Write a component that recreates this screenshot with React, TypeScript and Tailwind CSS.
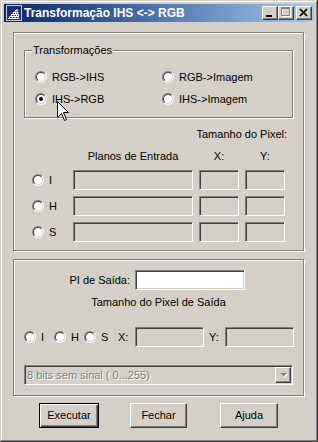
import React from "react";

const raised =
  "bg-[#d4d0c8] border border-t-white border-l-white border-r-[#404040] border-b-[#404040] shadow-[inset_-1px_-1px_0_#808080]";
const sunken =
  "border border-t-[#808080] border-l-[#808080] border-r-white border-b-white shadow-[inset_1px_1px_0_#404040,inset_-1px_-1px_0_#d4d0c8]";
const etched = "border border-[#808080] shadow-[inset_1px_1px_0_#fff,1px_1px_0_#fff]";

function Radio({ checked }: { checked?: boolean }) {
  return (
    <div className="w-[12px] h-[12px] shrink-0 rounded-full border border-t-[#808080] border-l-[#808080] border-r-white border-b-white">
      <div className="w-full h-full rounded-full border border-t-[#404040] border-l-[#404040] border-r-[#d4d0c8] border-b-[#d4d0c8] bg-white flex items-center justify-center">
        {checked && <div className="w-[4px] h-[4px] rounded-full bg-black" />}
      </div>
    </div>
  );
}

function Field({ w, white }: { w: string; white?: boolean }) {
  return <div className={`${w} h-[20px] ${sunken} ${white ? "bg-white" : "bg-[#d4d0c8]"}`} />;
}

function Btn({ label, w, def }: { label: string; w: string; def?: boolean }) {
  return (
    <div
      className={`${w} h-[25px] flex items-center justify-center ${
        def
          ? "border border-black shadow-[inset_1px_1px_0_#fff,inset_-1px_-1px_0_#404040,inset_-2px_-2px_0_#808080]"
          : raised
      }`}
    >
      {label}
    </div>
  );
}

function AppIcon() {
  return (
    <svg width="16" height="16" viewBox="0 0 16 16">
      <rect x="0.5" y="0.5" width="15" height="15" fill="#1b2c70" stroke="#c8cce0" />
      <g stroke="#fff" strokeWidth="1" fill="none">
        <path d="M2 13.5H13.5 M3.5 11.5H13 M5 9.5H12.5 M7 7.5H12 M9 5.5H11.5" />
        <path d="M2.5 13.5L11.5 4 M5.5 13.5L12 5.5 M8.5 13.5L12.5 7.5 M11.5 13.5L13 9.5" />
      </g>
    </svg>
  );
}

function Cursor() {
  return (
    <svg width="13" height="21" viewBox="0 0 13 21" className="absolute left-[57px] top-[101px]">
      <path
        d="M0.5 0.5 L0.5 16.5 L4.5 12.5 L7.5 19.5 L9.5 18.5 L6.5 11.5 L11.5 11.5 Z"
        fill="#fff"
        stroke="#000"
        strokeWidth="1"
        strokeLinejoin="miter"
      />
    </svg>
  );
}

export default function App() {
  return (
    <div className="relative w-[318px] h-[442px] bg-[#d4d0c8] p-[4px] font-['Liberation_Sans',Arial,sans-serif] text-[11px] leading-[13px] text-black shadow-[inset_-1px_-1px_0_#404040,inset_1px_1px_0_#d4d0c8,inset_-2px_-2px_0_#808080,inset_2px_2px_0_#fff] overflow-hidden">
      {/* Title bar */}
      <div className="h-[18px] flex items-center bg-gradient-to-r from-[#0a246a] to-[#a6caf0]">
        <div className="ml-[2px]">
          <AppIcon />
        </div>
        <div className="ml-[2px] text-white font-bold text-[12px] leading-[14px] whitespace-nowrap">
          Transformação IHS &lt;-&gt; RGB
        </div>
        <div className="ml-auto flex items-center mr-[2px]">
          <div className={`w-[16px] h-[14px] ${raised}`}>
            <svg width="14" height="12" viewBox="0 0 14 12">
              <rect x="3" y="8" width="6" height="2" fill="#000" />
            </svg>
          </div>
          <div className={`w-[16px] h-[14px] ${raised}`}>
            <svg width="14" height="12" viewBox="0 0 14 12">
              <g fill="none" stroke="#fff">
                <rect x="3.5" y="1.5" width="8" height="8" />
              </g>
              <g fill="none" stroke="#808080">
                <rect x="2.5" y="0.5" width="8" height="8" />
                <line x1="2.5" y1="1.5" x2="10.5" y2="1.5" />
              </g>
            </svg>
          </div>
          <div className={`ml-[2px] w-[16px] h-[14px] ${raised}`}>
            <svg width="14" height="12" viewBox="0 0 14 12">
              <path d="M3 2 L10 9 M10 2 L3 9" stroke="#000" strokeWidth="1.7" />
            </svg>
          </div>
        </div>
      </div>

      {/* Panel 1 */}
      <div className={`mt-[10px] ml-[9px] w-[291px] h-[219px] ${etched}`}>
        <div className={`relative mt-[17px] ml-[10px] w-[269px] h-[68px] ${etched}`}>
          <span className="absolute left-[7px] top-[-7px] px-[1px] bg-[#d4d0c8]">Transformações</span>
          <div className="pt-[20px] pl-[10px] grid grid-cols-[127px_1fr] gap-y-[10px]">
            <div className="flex items-center gap-[5px] h-[12px]">
              <Radio />
              <span>RGB-&gt;IHS</span>
            </div>
            <div className="flex items-center gap-[5px] h-[12px]">
              <Radio />
              <span>RGB-&gt;Imagem</span>
            </div>
            <div className="flex items-center gap-[5px] h-[12px]">
              <Radio checked />
              <span>IHS-&gt;RGB</span>
            </div>
            <div className="flex items-center gap-[5px] h-[12px]">
              <Radio />
              <span>IHS-&gt;Imagem</span>
            </div>
          </div>
        </div>

        <div className="mt-[10px] text-right pr-[16px]">Tamanho do Pixel:</div>

        <div className="mt-[9px] flex">
          <div className="w-[59px]" />
          <div className="w-[120px] text-center">Planos de Entrada</div>
          <div className="ml-[6px] w-[40px] text-center">X:</div>
          <div className="ml-[6px] w-[40px] text-center">Y:</div>
        </div>

        <div className="mt-[7px] flex flex-col gap-[6px]">
          {["I", "H", "S"].map((l) => (
            <div key={l} className="flex items-center">
              <div className="w-[59px] pl-[18px] flex items-center gap-[5px]">
                <Radio />
                <span>{l}</span>
              </div>
              <Field w="w-[120px]" />
              <div className="ml-[6px]">
                <Field w="w-[40px]" />
              </div>
              <div className="ml-[6px]">
                <Field w="w-[40px]" />
              </div>
            </div>
          ))}
        </div>
      </div>

      {/* Panel 2 */}
      <div className={`mt-[8px] ml-[9px] w-[291px] h-[137px] ${etched}`}>
        <div className="mt-[10px] flex items-center">
          <div className="w-[116px] text-right">PI de Saída:</div>
          <div className="ml-[5px]">
            <Field w="w-[110px]" white />
          </div>
        </div>
        <div className="mt-[6px] text-center">Tamanho do Pixel de Saída</div>
        <div className="mt-[18px] ml-[10px] flex items-center">
          <div className="w-[30px] flex items-center gap-[5px]">
            <Radio />
            <span>I</span>
          </div>
          <div className="w-[30px] flex items-center gap-[5px]">
            <Radio />
            <span>H</span>
          </div>
          <div className="w-[34px] flex items-center gap-[5px]">
            <Radio />
            <span>S</span>
          </div>
          <div className="w-[17px]">X:</div>
          <Field w="w-[69px]" />
          <div className="ml-[5px] w-[16px]">Y:</div>
          <Field w="w-[69px]" />
        </div>
        <div className={`mt-[18px] ml-[10px] w-[269px] h-[20px] ${sunken} bg-[#d4d0c8] flex items-center p-[1px]`}>
          <span className="pl-[1px] text-[#808080] [text-shadow:1px_1px_0_#fff] whitespace-nowrap">
            8 bits sem sinal ( 0...255)
          </span>
          <div className={`ml-auto w-[16px] h-[16px] ${raised} flex items-center justify-center`}>
            <svg width="9" height="6" viewBox="0 0 9 6">
              <path d="M2 2 H9 L5.5 5.5 Z" fill="#fff" />
              <path d="M1 1 H8 L4.5 4.5 Z" fill="#808080" />
            </svg>
          </div>
        </div>
      </div>

      {/* Buttons */}
      <div className="mt-[7px] flex">
        <div className="ml-[35px]">
          <Btn label="Executar" w="w-[60px]" def />
        </div>
        <div className="ml-[31px]">
          <Btn label="Fechar" w="w-[57px]" />
        </div>
        <div className="ml-[33px]">
          <Btn label="Ajuda" w="w-[58px]" />
        </div>
      </div>

      <Cursor />
    </div>
  );
}
